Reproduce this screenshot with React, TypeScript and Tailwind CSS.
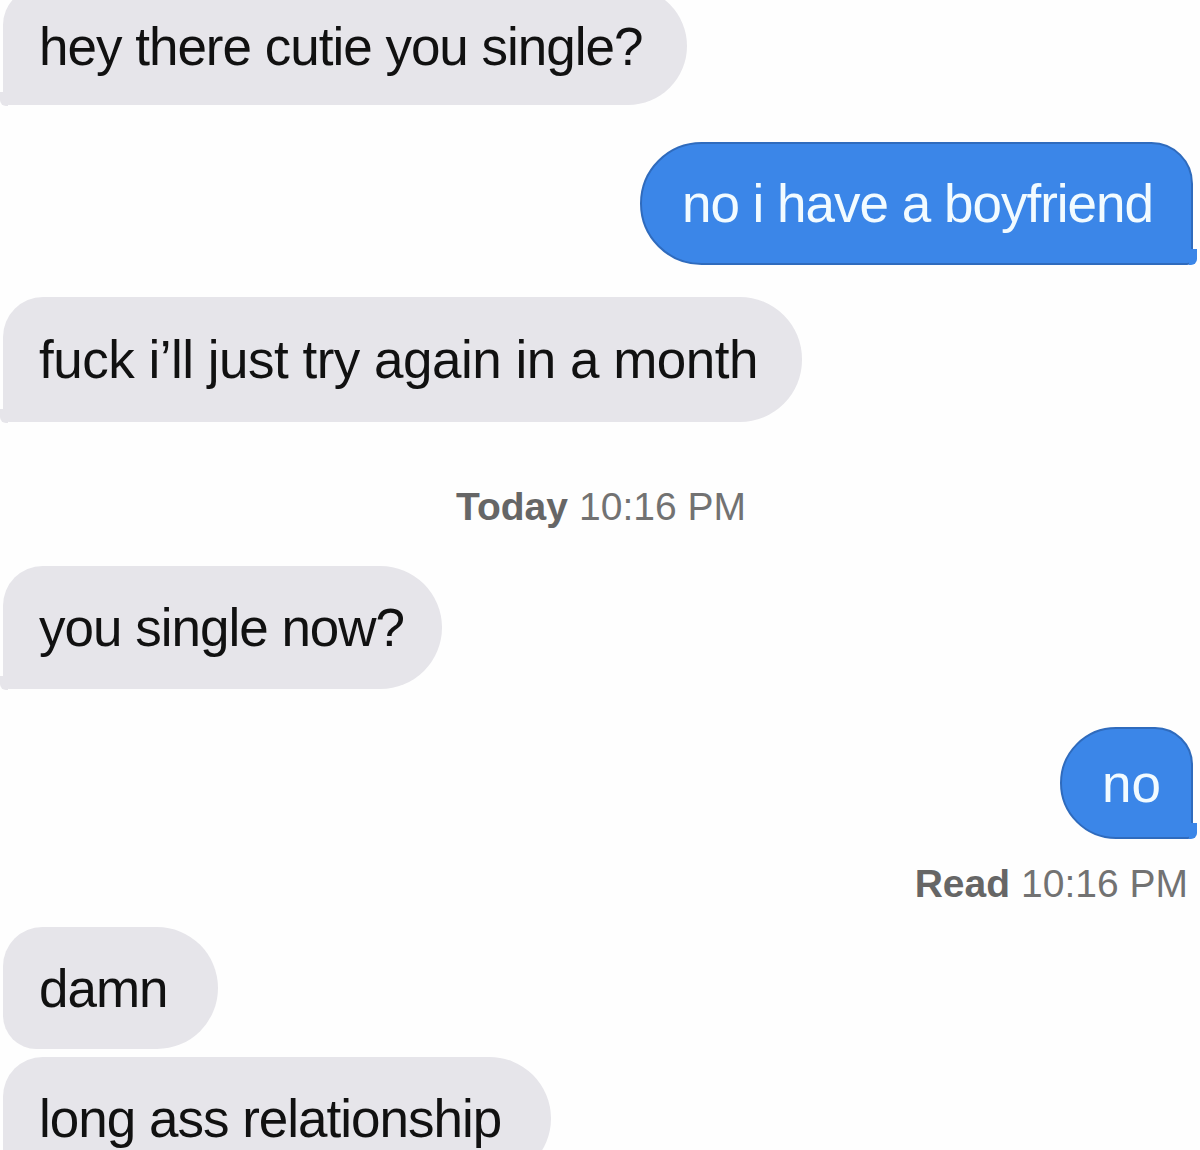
import React from 'react';

type Side = 'in' | 'out';

const Bubble: React.FC<{ side: Side; text: string; tail?: boolean; className?: string; textClass?: string }> = ({
  side,
  text,
  tail = true,
  className = '',
  textClass = 'tracking-[-1px]',
}) => {
  const isOut = side === 'out';
  const shape = isOut
    ? `rounded-l-[62px] rounded-tr-[42px] ${tail ? 'rounded-br-[6px]' : 'rounded-br-[42px]'}`
    : `rounded-r-[62px] rounded-tl-[40px] ${tail ? 'rounded-bl-[6px]' : 'rounded-bl-[34px]'}`;
  return (
    <div className={`flex ${isOut ? 'justify-end' : 'justify-start'} ${className}`}>
      <div
        className={`relative flex items-center ${shape} ${
          isOut
            ? 'bg-[#3b86e8] text-[#f2fbff] border-2 border-[#2f6bbd] pl-[40px] pr-[38px]'
            : 'bg-[#e6e5ea] text-[#111111] pl-[36px] pr-[44px]'
        }`}
      >
        {tail && !isOut && (
          <span className="absolute -bottom-[1px] -left-[3px] h-[14px] w-[8px] rounded-bl-[6px] bg-[#e6e5ea]" />
        )}
        {tail && isOut && (
          <span className="absolute -bottom-[2px] -right-[6px] h-[16px] w-[8px] rounded-br-[6px] bg-[#3b86e8]" />
        )}
        <span className={`relative whitespace-nowrap text-[53px] leading-none ${textClass}`}>{text}</span>
      </div>
    </div>
  );
};

export default function App() {
  return (
    <div className="min-h-screen w-[1200px] overflow-hidden bg-[#fefefe] font-['Liberation_Sans',Arial,sans-serif]">
      <div className="-mt-[13px] flex flex-col pl-[3px] pr-[7px]">
        <Bubble side="in" text="hey there cutie you single?" className="[&>div]:h-[118px]" />
        <Bubble side="out" text="no i have a boyfriend" className="mt-[37px] [&>div]:h-[123px]" />
        <Bubble
          side="in"
          text="fuck i’ll just try again in a month"
          textClass="tracking-[-0.5px]"
          className="mt-[32px] [&>div]:h-[125px]"
        />

        {/* timestamp */}
        <div className="mt-[62px] flex h-[46px] items-center justify-center pl-[6px] text-[39px] text-[#727272]">
          <span className="font-bold text-[#666666]">Today</span>
          <span className="ml-[11px]">10:16 PM</span>
        </div>

        <Bubble side="in" text="you single now?" className="mt-[36px] [&>div]:h-[123px] [&>div]:pr-[38px]" />
        <Bubble side="out" text="no" textClass="tracking-[0px]" className="mt-[38px] [&>div]:h-[112px] [&>div]:pr-[30px]" />

        <div className="mt-[22px] flex h-[46px] items-center justify-end pr-[5px] text-[39px] text-[#727272]">
          <span className="font-bold text-[#666666]">Read</span>
          <span className="ml-[11px]">10:16 PM</span>
        </div>

        <Bubble side="in" text="damn" tail={false} className="mt-[20px] [&>div]:h-[122px] [&>div]:pr-[50px]" />
        <Bubble side="in" text="long ass relationship" className="mt-[8px] [&>div]:h-[123px] [&>div]:pr-[50px]" />
      </div>
    </div>
  );
}
